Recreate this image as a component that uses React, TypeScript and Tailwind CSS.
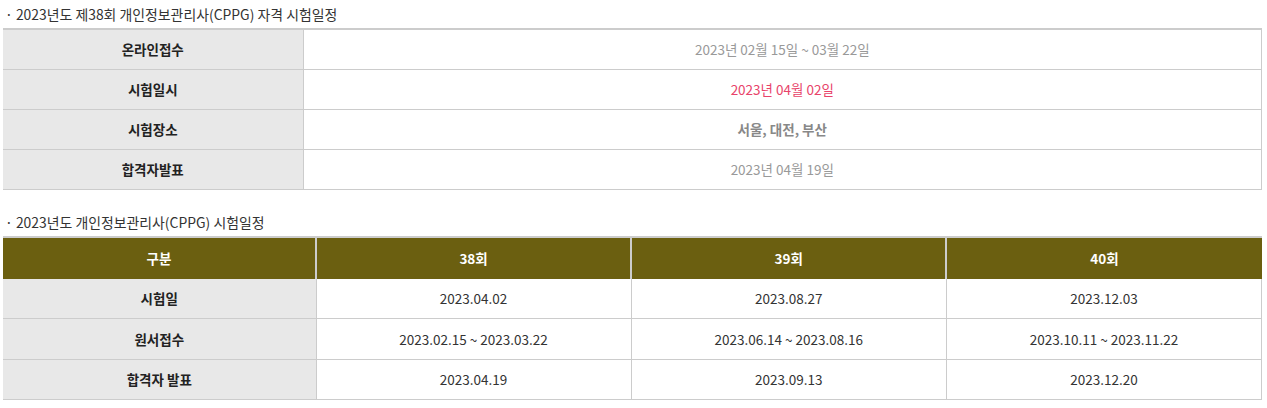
import React from "react"

const info = [
  { label: "온라인접수", value: "2023년 02월 15일 ~ 03월 22일", cls: "text-[#999] font-normal" },
  { label: "시험일시", value: "2023년 04월 02일", cls: "text-[#e8436a] font-normal" },
  { label: "시험장소", value: "서울, 대전, 부산", cls: "text-[#888] font-bold" },
  { label: "합격자발표", value: "2023년 04월 19일", cls: "text-[#999] font-normal" },
]

const rounds = ["38회", "39회", "40회"]

const schedule = [
  { label: "시험일", values: ["2023.04.02", "2023.08.27", "2023.12.03"], h: "h-[40px]" },
  { label: "원서접수", values: ["2023.02.15 ~ 2023.03.22", "2023.06.14 ~ 2023.08.16", "2023.10.11 ~ 2023.11.22"], h: "h-[41px]" },
  { label: "합격자 발표", values: ["2023.04.19", "2023.09.13", "2023.12.20"], h: "h-[40px]" },
]

export default function App() {
  return (
    <div
      className="w-[1267px] h-[408px] bg-white pl-[3px] pr-[5px] text-[13.5px]"
      style={{ fontFamily: '"Malgun Gothic", "Noto Sans CJK KR", "Noto Sans", sans-serif' }}
    >
      {/* 자격 시험일정 */}
      <h3 className="h-[28px] pt-[4px] pl-[2px] text-[13.9px] leading-[20px] text-[#333] font-normal">
        · 2023년도 제38회 개인정보관리사(CPPG) 자격 시험일정
      </h3>
      <table className="w-full border-collapse border-t-2 border-t-[#ccc] table-fixed">
        <colgroup>
          <col className="w-[300px]" />
          <col />
        </colgroup>
        <tbody>
          {info.map((row) => (
            <tr key={row.label} className="h-[40px] border-b border-[#ccc]">
              <th className="bg-[#e8e8e8] text-[#222] font-bold text-center border-r border-[#ccc]">{row.label}</th>
              <td className={`text-center border-r border-[#ccc] ${row.cls}`}>{row.value}</td>
            </tr>
          ))}
        </tbody>
      </table>

      {/* 연간 시험일정 */}
      <h3 className="h-[46px] pt-[22px] pl-[2px] text-[13.9px] leading-[20px] text-[#333] font-normal">
        · 2023년도 개인정보관리사(CPPG) 시험일정
      </h3>
      <table className="w-full border-collapse border-t-2 border-t-[#ccc] table-fixed">
        <thead>
          <tr className="h-[42px] bg-[#6b5f10] text-white">
            <th className="w-[313px] font-bold border-r-2 border-[#ccc]">구분</th>
            {rounds.map((r) => (
              <th key={r} className="font-bold border-r-2 border-[#ccc] last:border-r-0">{r}</th>
            ))}
          </tr>
        </thead>
        <tbody>
          {schedule.map((row) => (
            <tr key={row.label} className={`${row.h} border-b border-[#ccc]`}>
              <th className="bg-[#e8e8e8] text-[#222] font-bold text-center border-r border-[#ccc]">{row.label}</th>
              {row.values.map((v, i) => (
                <td key={i} className="text-center text-[#333] border-r border-[#ccc]">{v}</td>
              ))}
            </tr>
          ))}
        </tbody>
      </table>
    </div>
  )
}
